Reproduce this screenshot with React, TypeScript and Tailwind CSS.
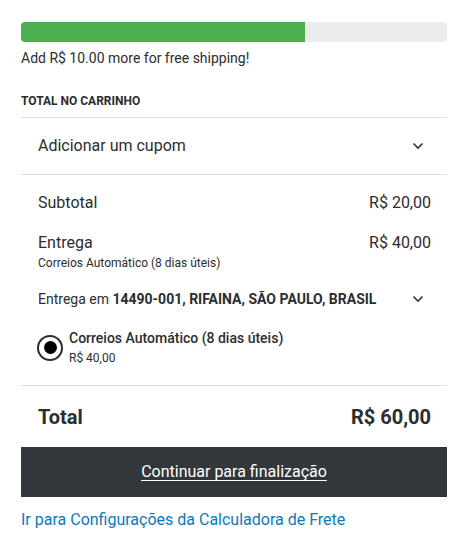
import { useState } from "react";

const SUBTOTAL: number = 20;
const SHIPPING: number = 40;
const FREE_SHIPPING_AT: number = 30;

const brl = function (value: number): string {
  return "R$ " + value.toFixed(2).replace(".", ",");
};

function Chevron() {
  return (
    <svg width="12" height="8" viewBox="0 0 12 8" fill="none" className="shrink-0">
      <path d="M1.5 1.5 L6 6 L10.5 1.5" stroke="#333" strokeWidth="1.6" />
    </svg>
  );
}

export default function App() {
  const [selected, setSelected] = useState<boolean>(true);
  const pct: number = (SUBTOTAL / FREE_SHIPPING_AT) * 100;

  return (
    <div className="w-[470px] h-[554px] bg-white pl-[21px] pr-[23px] pt-[22px] text-[#2b2d2f] font-['Roboto',sans-serif]">
      <div className="h-[20px] w-full rounded-[4px] bg-[#ececec] overflow-hidden">
        <div className="h-full bg-[#4caf50]" style={{ width: pct + "%" }} />
      </div>
      <p className="mt-[7px] text-[14px] leading-[18px]">Add R$ 10.00 more for free shipping!</p>

      <h2 className="mt-[26px] text-[12px] leading-[16px] font-bold uppercase">Total no carrinho</h2>

      <div className="mt-[8px] border-t border-[#e0e0e0]">
        <button className="flex w-full items-center justify-between pl-[17px] pr-[23px] h-[56px] text-[16px]">
          <span>Adicionar um cupom</span>
          <Chevron />
        </button>
      </div>

      <div className="border-t border-[#e0e0e0] pl-[17px] pr-[16px] pt-[17px] pb-[18px]">
        <div className="flex justify-between text-[16px] leading-[22px]">
          <span>Subtotal</span>
          <span>{brl(SUBTOTAL)}</span>
        </div>
        <div className="mt-[18px] flex justify-between text-[16px] leading-[22px]">
          <span>Entrega</span>
          <span>{brl(SHIPPING)}</span>
        </div>
        <p className="mt-[1px] text-[12px] leading-[17px]">Correios Automático (8 dias úteis)</p>

        <div className="mt-[17px] flex items-center justify-between pr-[7px] text-[14px] leading-[20px]">
          <span>
            Entrega em <strong className="font-bold">14490-001, RIFAINA, SÃO PAULO, BRASIL</strong>
          </span>
          <Chevron />
        </div>

        <label className="mt-[19px] -ml-[1px] flex items-center gap-[6px] cursor-pointer" onClick={() => setSelected(true)}>
          <span className="flex h-[26px] w-[26px] items-center justify-center rounded-full border-2 border-[#2b2d2f]">
            {selected && <span className="h-[13px] w-[13px] rounded-full bg-black" />}
          </span>
          <span className="flex flex-col">
            <span className="text-[14px] leading-[20px] font-medium">Correios Automático (8 dias úteis)</span>
            <span className="text-[12px] leading-[17px] mt-[2px]">{brl(SHIPPING)}</span>
          </span>
        </label>
      </div>

      <div className="border-t border-[#e0e0e0] flex justify-between pl-[17px] pr-[16px] pt-[18px] pb-[17px] text-[20px] leading-[26px] font-bold">
        <span>Total</span>
        <span>{brl(SUBTOTAL + SHIPPING)}</span>
      </div>

      <button className="flex h-[50px] w-full items-center justify-center bg-[#32373c] text-[16px] text-white underline underline-offset-[3px]">
        Continuar para finalização
      </button>

      <a href="#" className="mt-[12px] block text-[16px] leading-[22px] text-[#0a7ab8]">
        Ir para Configurações da Calculadora de Frete
      </a>
    </div>
  );
}
